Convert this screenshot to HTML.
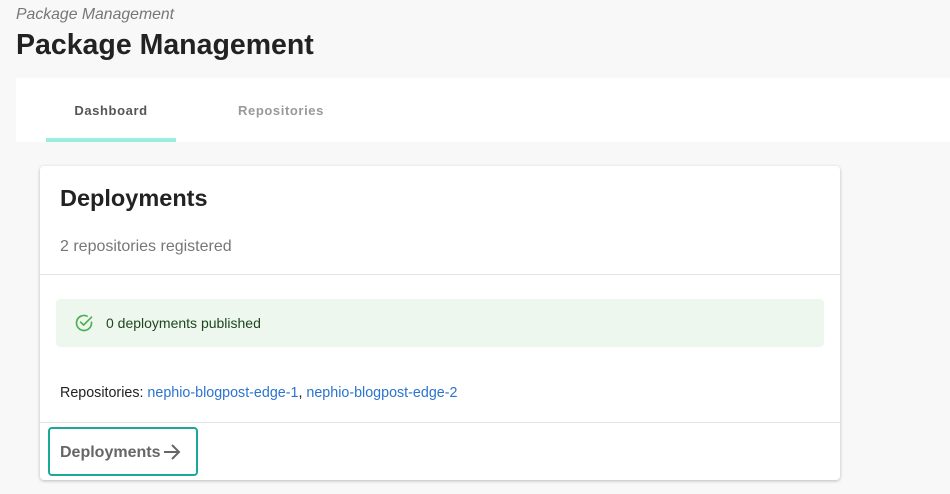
<!DOCTYPE html>
<html><head><meta charset="utf-8"><style>
*{box-sizing:border-box;margin:0;padding:0}
body{width:950px;height:494px;background:#f8f8f8;font-family:"Liberation Sans",sans-serif;position:relative;overflow:hidden}
.a{position:absolute}
</style></head><body>
<div class="a" style="left:16px;top:6px;font-size:15.8px;font-style:italic;color:#777">Package Management</div>
<div class="a" style="left:16px;top:29px;font-size:28.5px;font-weight:bold;color:#222">Package Management</div>
<div class="a" style="left:16px;top:78px;width:934px;height:64px;background:#fff"></div>
<div class="a" style="left:46px;top:103px;width:130px;text-align:center;font-size:13px;font-weight:bold;color:#555;letter-spacing:0.6px">Dashboard</div>
<div class="a" style="left:216px;top:103px;width:130px;text-align:center;font-size:13px;font-weight:bold;color:#999;letter-spacing:0.6px">Repositories</div>
<div class="a" style="left:46px;top:138px;width:130px;height:4px;background:#9aeedd"></div>
<div class="a" style="left:40px;top:166px;width:800px;height:314px;background:#fff;border-radius:4px;box-shadow:0 1px 3px rgba(0,0,0,.25)">
  <div class="a" style="left:20px;top:19px;font-size:23.5px;font-weight:bold;color:#222">Deployments</div>
  <div class="a" style="left:20px;top:72px;font-size:16px;color:#777">2 repositories registered</div>
  <div class="a" style="left:0;top:108px;width:800px;height:1px;background:#e4e4e4"></div>
  <div class="a" style="left:16px;top:133px;width:768px;height:48px;background:#edf7ed;border-radius:4px">
    <svg class="a" style="left:18px;top:14px" width="20" height="20" viewBox="0 0 24 24"><path d="M21 11.1V12a9 9 0 1 1-5.3-8.2" fill="none" stroke="#4caf50" stroke-width="2" stroke-linecap="round"/><path d="M8 11l3.5 3.5L21 5" fill="none" stroke="#4caf50" stroke-width="2" stroke-linecap="round" stroke-linejoin="round"/></svg>
    <div class="a" style="left:50px;top:16px;font-size:14px;color:#1e4620">0 deployments published</div>
  </div>
  <div class="a" style="left:20px;top:219px;font-size:14.3px;color:#222">Repositories: <span style="color:#2a74d0">nephio-blogpost-edge-1</span>, <span style="color:#2a74d0">nephio-blogpost-edge-2</span></div>
  <div class="a" style="left:0;top:256px;width:800px;height:1px;background:#e4e4e4"></div>
  <div class="a" style="left:8px;top:261px;width:150px;height:49px;border:2px solid #1aa898;border-radius:4px"></div>
  <div class="a" style="left:20px;top:278px;font-size:16px;font-weight:bold;color:#666">Deployments</div>
  <svg class="a" style="left:122px;top:277px" width="20" height="18" viewBox="0 0 20 18"><path d="M2 9h15M10 2l7 7-7 7" fill="none" stroke="#666" stroke-width="2"/></svg>
</div>
</body></html>
